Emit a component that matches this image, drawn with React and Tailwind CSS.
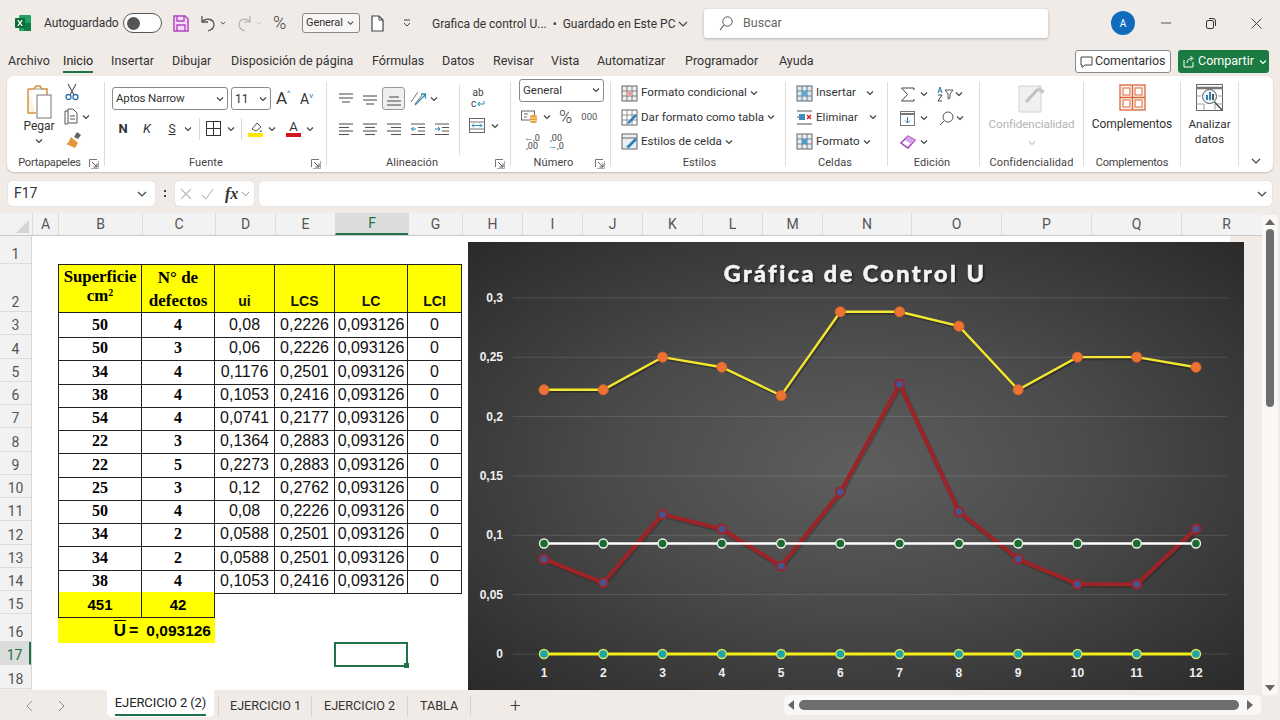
import React from "react";

const S = ({ w, h, className = "", children }) => (
  <svg width={w} height={h} viewBox={`0 0 ${w} ${h}`} fill="none" className={"shrink-0 " + className}>
    {children}
  </svg>
);
const Chev = ({ className = "", c = "#444" }) => (
  <S w={8} h={6} className={className}><path d="M1 1.5 4 4.5 7 1.5" stroke={c} strokeWidth="1.2" /></S>
);
const Launcher = () => (
  <S w={10} h={10} className="mr-[5px]">
    <path d="M.5 8V.5H8" stroke="#777" /><path d="M3 3l5 5M8 4.5V8H4.5" stroke="#555" />
    <path d="M9.5 2v7.5H2" stroke="#aaa" />
  </S>
);
const Lines = ({ rows, c = "#555" }) => (
  <S w={16} h={14}>
    {rows.map((r, i) => <path key={i} d={`M${r[0]} ${r[2]}H${r[1]}`} stroke={c} strokeWidth="1.1" />)}
  </S>
);
const Sep = () => <div className="w-px my-[6px] bg-[#dedcda] shrink-0" />;

const Group = ({ className, label, launcher, children, labelClass = "tracking-[0.1px]" }) => (
  <div className={"flex flex-col shrink-0 h-full " + className}>
    <div className="h-[78px] flex">{children}</div>
    <div className="h-[18px] flex items-center pt-[1px]">
      <span className={"flex-1 text-center text-[11px] text-[#444] " + labelClass}>{label}</span>
      {launcher && <Launcher />}
    </div>
  </div>
);

const Cellgrid = ({ accent = "#b44", fill = "#eee" }) => (
  <S w={17} h={17}>
    <rect x="1" y="1" width="15" height="15" fill={fill} stroke="#666" />
    <path d="M1 6h15M1 11h15M6 1v15M11 1v15" stroke="#666" strokeWidth=".8" />
    <rect x="6" y="6" width="5" height="5" fill={accent} />
  </S>
);

const TabsList = [
  ["Archivo", "w-[55px]", ""], ["Inicio", "w-[48px]", "on"], ["Insertar", "w-[61px]", ""], ["Dibujar", "w-[59px]", ""],
  ["Disposición de página", "w-[141px]", ""], ["Fórmulas", "w-[70px]", ""], ["Datos", "w-[51px]", ""], ["Revisar", "w-[58px]", ""],
  ["Vista", "w-[46px]", ""], ["Automatizar", "w-[88px]", ""], ["Programador", "w-[94px]", ""], ["Ayuda", "w-[60px]", ""],
];

const TitleBar = () => (
  <div className="h-[46px] flex items-center text-[#333] shrink-0">
    <S w={16} h={16} className="ml-[15px]">
      <rect x="4" y="0" width="12" height="16" rx="1" fill="#21a366" />
      <rect x="9" y="8" width="7" height="8" fill="#107c41" />
      <rect x="0" y="3" width="10" height="10" rx="1" fill="#0e6b38" />
      <path d="M2.8 5.2 7.2 10.8M7.2 5.2 2.8 10.8" stroke="#fff" strokeWidth="1.3" />
    </S>
    <span className="ml-[13px] w-[74px] text-[12px] tracking-[-0.1px]">Autoguardado</span>
    <div className="ml-[5px] w-[39px] h-[20px] rounded-full border border-[#555] bg-white flex items-center pl-[3px]">
      <div className="w-[13px] h-[13px] rounded-full bg-[#555]" />
    </div>
    <S w={16} h={17} className="ml-[11px]">
      <path d="M1 1h11l3 3v12H1z" stroke="#b146c2" strokeWidth="1.5" fill="#f4dcf7" />
      <path d="M4 1v5h7V1M4 16v-6h8v6" stroke="#b146c2" strokeWidth="1.4" />
    </S>
    <S w={17} h={17} className="ml-[10px]">
      <path d="M3 1v6h6M3 7c3-4 11-4 12 2 .5 4-3 6-6 7" stroke="#555" strokeWidth="1.3" />
    </S>
    <Chev className="ml-[4px] w-[6px]" />
    <S w={15} h={17} className="ml-[11px]">
      <path d="M13 1v6H7M13 7c-3-4-10-4-11 2-.5 4 3 6 6 7" stroke="#b5b0ad" strokeWidth="1.2" />
    </S>
    <Chev className="ml-[4px] w-[6px]" c="#bbb" />
    <span className="ml-[11px] w-[17px] text-[18px] leading-none text-[#444] font-light">%</span>
    <div className="ml-[12px] w-[58px] h-[20px] rounded-[3px] border border-[#888] bg-[#f8f6f4] flex items-center pl-[3px] text-[11px] tracking-[-0.1px]">
      General<Chev className="ml-[4px] w-[7px]" />
    </div>
    <S w={13} h={17} className="ml-[11px]">
      <path d="M1 1h7l4 4v11H1z" stroke="#444" strokeWidth="1.2" fill="#fff" /><path d="M8 1v4h4" stroke="#444" />
    </S>
    <S w={8} h={8} className="ml-[19px]"><path d="M1 1h6M1 4 4 7l3-3" stroke="#444" /></S>
    <div className="ml-[21px] w-[240px] pt-[2px] flex items-center text-[12px] text-[#333] whitespace-nowrap">
      Grafica de control U...&nbsp;&nbsp;•&nbsp;&nbsp;Guardado en Este PC
      <S w={10} h={6} className="ml-[3px]"><path d="M1 1l4 4 4-4" stroke="#444" strokeWidth="1.2" /></S>
    </div>
    <div className="ml-[32px] w-[344px] h-[29px] rounded-[3px] bg-white shadow-[0_1px_3px_rgba(0,0,0,0.25)] flex items-center pl-[15px] text-[12.5px] text-[#666]">
      <S w={14} h={15}><circle cx="8.5" cy="5.5" r="4.7" stroke="#555" /><path d="M5 9 1 14" stroke="#555" strokeWidth="1.2" /></S>
      <span className="ml-[10px]">Buscar</span>
    </div>
    <div className="ml-[63px] w-[24px] h-[24px] rounded-full bg-[#0f6cbd] text-white text-[10px] flex items-center justify-center">A</div>
    <S w={10} h={2} className="ml-[26px]"><path d="M0 1h10" stroke="#555" /></S>
    <S w={10} h={11} className="ml-[35px]"><rect x=".5" y="2.5" width="7" height="8" rx="1.5" stroke="#333" /><path d="M3 .5h4a2.5 2.5 0 0 1 2.5 2.5v5" stroke="#333" /></S>
    <S w={11} h={11} className="ml-[35px]"><path d="M.5.5l10 10M10.5.5l-10 10" stroke="#444" /></S>
  </div>
);

const TabBar = () => (
  <div className="h-[30px] flex items-center text-[12.5px] text-[#333] shrink-0 pl-[8px] pt-[1px]">
    {TabsList.map(([t, w, on]) => (
      <div key={t} className={w + " relative h-full flex items-center"}>
        <span className={on ? "border-b-2 border-[#1f7346] pb-[1px] mt-[2px] text-[#222]" : ""}>{t}</span>
      </div>
    ))}
    <div className="ml-[236px] w-[96px] h-[23px] rounded-[3px] border border-[#8a8a8a] bg-white flex items-center pl-[4px] text-[12.5px] tracking-[-0.1px]">
      <S w={13} h={12}><path d="M1 1h11v8H5l-3 2.5V9H1z" stroke="#444" /></S>
      <span className="ml-[2px]">Comentarios</span>
    </div>
    <div className="ml-[7px] w-[91px] h-[23px] rounded-[3px] bg-[#1b7b43] text-white flex items-center pl-[4px] text-[12.5px]">
      <S w={13} h={13}><path d="M2 5v7h9V7M5 8c0-3 2-4.5 5-4.5M8.5 1 11 3.5 8.5 6" stroke="#fff" /></S>
      <span className="ml-[3px]">Compartir</span>
      <Chev className="ml-[5px]" c="#fff" />
    </div>
  </div>
);

const Clipboard = () => (
  <Group className="w-[97px]" label="Portapapeles" launcher labelClass="tracking-[-0.2px] pl-[3px]">
    <div className="w-[34px] ml-[15px] flex flex-col items-center pt-[8px]">
      <S w={28} h={35}>
        <path d="M3 5h6l2-3h4l2 3h5v6" stroke="#d8933f" strokeWidth="1.5" fill="none" />
        <path d="M3 5v24h8" stroke="#d8933f" strokeWidth="1.5" fill="#fdf3e4" />
        <rect x="12" y="11" width="14" height="23" fill="#fff" stroke="#777" />
        <path d="M10 5h8" stroke="#999" />
      </S>
      <span className="text-[12px] leading-[14px] text-[#333]">Pegar</span>
      <Chev className="mt-[5px]" />
    </div>
    <div className="ml-[8px] flex flex-col pt-[7px]">
      <S w={16} h={18}><path d="M4 1l6 11M12 1 6 12" stroke="#555" strokeWidth="1.1" /><circle cx="4.5" cy="14" r="2.5" stroke="#2f6fa8" strokeWidth="1.3" /><circle cx="11.5" cy="14" r="2.5" stroke="#2f6fa8" strokeWidth="1.3" /></S>
      <div className="flex items-center mt-[7px]">
        <S w={14} h={17}><path d="M4 3H1v13h3" stroke="#555" /><path d="M4 1h5l4 4v10H4z" stroke="#555" /><path d="M6 8h5M6 11h5" stroke="#555" /></S>
        <Chev className="ml-[4px]" />
      </div>
      <S w={18} h={18} className="mt-[6px]"><path d="M10 6l3-5 4 3-3 4z" fill="#666" /><path d="M7 6l7 6-3 5-9-4 2-1z" fill="#e3963e" /></S>
    </div>
  </Group>
);

const Select = ({ className, label, textClass = "text-[12px]" }) => (
  <div className={"h-[23px] rounded-[3px] border border-[#8a8a8a] bg-white flex items-center justify-between px-[3px] " + className}>
    <span className={"text-[#333] " + textClass}>{label}</span>
    <Chev />
  </div>
);

const Font = () => (
  <Group className="w-[221px]" label="Fuente" launcher labelClass="tracking-[0.1px] pr-[4px]">
    <div className="flex flex-col pt-[11px] pl-[7px] w-full">
      <div className="flex items-center h-[23px]">
        <Select className="w-[116px]" label="Aptos Narrow" textClass="text-[11.5px] tracking-[-0.15px]" />
        <Select className="w-[40px] ml-[3px]" label="11" />
        <span className="ml-[5px] w-[22px] text-[17px] leading-none text-[#333] relative">A<span className="text-[8px] align-top text-[#2f6fa8]">^</span></span>
        <span className="ml-[2px] w-[20px] text-[14px] leading-none text-[#333]">A<span className="text-[8px] align-top text-[#2f6fa8]">v</span></span>
      </div>
      <div className="flex items-center h-[23px] mt-[7px] text-[#333]">
        <span className="w-[22px] text-[13px] font-bold text-center">N</span>
        <span className="ml-[2px] w-[22px] text-[13px] italic text-center">K</span>
        <span className="ml-[6px] w-[16px] text-[12px] underline text-center">S</span>
        <Chev className="ml-[4px]" />
        <div className="w-px h-[22px] bg-[#d8d8d8] ml-[7px]" />
        <S w={15} h={15} className="ml-[6px]"><rect x=".5" y=".5" width="14" height="14" stroke="#333" /><path d="M7.5 0v15M0 7.5h15" stroke="#333" /></S>
        <Chev className="ml-[6px]" />
        <div className="w-px h-[22px] bg-[#d8d8d8] ml-[6px]" />
        <div className="ml-[6px] w-[15px] flex flex-col items-center">
          <S w={14} h={12}><path d="M3 8l5-6 4 4-5 4z" stroke="#555" /><path d="M12 8l1 3h-2z" fill="#3c7fb5" /></S>
          <div className="w-[15px] h-[4px] bg-[#ffe600]" />
        </div>
        <Chev className="ml-[5px]" />
        <div className="ml-[10px] w-[15px] flex flex-col items-center">
          <span className="text-[13px] leading-[12px] text-[#333]">A</span>
          <div className="w-[15px] h-[4px] bg-[#d4161c]" />
        </div>
        <Chev className="ml-[5px]" />
      </div>
    </div>
  </Group>
);

const Align = () => (
  <Group className="w-[183px]" label="Alineación" launcher labelClass="tracking-[0.1px] pl-[2px]">
    <div className="flex flex-col pt-[11px] pl-[11px] w-[132px]">
      <div className="flex items-center h-[23px]">
        <Lines rows={[[1, 15, 2], [1, 15, 6], [4, 12, 10]]} />
        <div className="ml-[8px]"><Lines rows={[[1, 15, 4], [1, 15, 8], [4, 12, 12]]} /></div>
        <div className="ml-[4px] w-[23px] h-[23px] rounded-[3px] border border-[#999] bg-[#efefef] flex items-center justify-center"><Lines rows={[[3, 13, 5], [1, 15, 9], [1, 15, 13]]} /></div>
        <S w={17} h={15} className="ml-[5px]"><path d="M1 11 8 1M5 13 12 4" stroke="#777" /><path d="M5 14 15 4M11 3h4.5v4.5" stroke="#2f8fb5" strokeWidth="1.3" /></S>
        <Chev className="ml-[3px]" />
      </div>
      <div className="flex items-center h-[23px] mt-[7px]">
        <Lines rows={[[1, 15, 2], [1, 11, 5.5], [1, 15, 9], [1, 11, 12.5]]} />
        <div className="ml-[8px]"><Lines rows={[[1, 15, 2], [3, 13, 5.5], [1, 15, 9], [3, 13, 12.5]]} /></div>
        <div className="ml-[8px]"><Lines rows={[[1, 15, 2], [5, 15, 5.5], [1, 15, 9], [5, 15, 12.5]]} /></div>
        <S w={16} h={14} className="ml-[8px]"><path d="M1 2h14M8 5.5h7M8 9h7M1 12.5h14" stroke="#555" /><path d="M6 7H1.5M3.5 5 1.5 7l2 2" stroke="#1f7fc0" /></S>
        <S w={16} h={14} className="ml-[8px]"><path d="M1 2h14M8 5.5h7M8 9h7M1 12.5h14" stroke="#555" /><path d="M1 7h5M4 5l2 2-2 2" stroke="#1f7fc0" /></S>
      </div>
    </div>
    <div className="w-px h-[70px] bg-[#dedcda] mt-[9px]" />
    <div className="flex flex-col pt-[11px] pl-[9px]">
      <div className="w-[18px] h-[23px] flex flex-col items-center text-[10px] leading-[11px] text-[#444]">
        <span>ab</span>
        <div className="flex items-center">
          <span>c</span>
          <S w={9} h={8}><path d="M8 1v3H2M4 2 1.500 4 4 6" stroke="#2f8fb5" /></S>
        </div>
      </div>
      <div className="flex items-center mt-[8px]">
        <S w={16} h={15}><rect x=".5" y=".5" width="15" height="14" stroke="#666" /><path d="M0 4h16M0 11h16" stroke="#777" /><path d="M3 7.5h10M5 5.5l-2 2 2 2M11 5.5l2 2-2 2" stroke="#2f8fb5" /></S>
        <Chev className="ml-[6px]" />
      </div>
    </div>
  </Group>
);

const Number = () => (
  <Group className="w-[99px]" label="Número" launcher labelClass="tracking-[0.1px] pl-[1px]">
    <div className="flex flex-col pl-[8px] pt-[3px]">
      <Select className="w-[85px]" label="General" textClass="text-[11.5px]" />
      <div className="flex items-center h-[25px] mt-[3px]">
        <S w={18} h={14} className="ml-[2px]"><rect x=".5" y="1" width="13" height="9" fill="#fff" stroke="#666" /><path d="M3 4h4M3 7h3" stroke="#666" /><rect x="9" y="5" width="7" height="8" rx="2" fill="#e9a23b" /><path d="M9 8h7M9 10.5h7" stroke="#fff" strokeWidth=".6" /></S>
        <Chev className="ml-[4px]" />
        <span className="ml-[8px] text-[18px] leading-none font-light text-[#444]">%</span>
        <span className="ml-[9px] text-[9.5px] text-[#555]">000</span>
      </div>
      <div className="flex items-center h-[25px] text-[9px] leading-[8px] text-[#444]">
        <div className="ml-[3px] w-[20px] flex flex-col items-center"><span><span className="text-[#1f7fc0]">←</span>,0</span><span>,00</span></div>
        <div className="ml-[4px] w-[20px] flex flex-col items-center"><span>,00</span><span><span className="text-[#1f7fc0]">→</span>,0</span></div>
      </div>
    </div>
  </Group>
);

const ListRow = ({ icon, text, cls = "", chevCls = "ml-[3px]" }) => (
  <div className={"flex items-center h-[25px] " + cls}>
    {icon}
    <span className="ml-[3px] text-[11.6px] text-[#333] whitespace-nowrap">{text}</span>
    <Chev className={chevCls} />
  </div>
);

const Styles = () => (
  <Group className="w-[174px]" label="Estilos" labelClass="tracking-[0.1px] pl-[3px]">
    <div className="flex flex-col pt-[5px] pl-[10px]">
      <ListRow text="Formato condicional" icon={<Cellgrid accent="#e9a0a0" />} />
      <ListRow text="Dar formato como tabla" icon={<S w={17} h={17}><rect x="1" y="1" width="15" height="15" fill="#fff" stroke="#666" /><path d="M1 6h15M6 1v15M11 1v15M1 11h15" stroke="#666" strokeWidth=".7" /><path d="M6 14 14 5l2 2-8 8z" fill="#2f7fb5" /></S>} />
      <ListRow text="Estilos de celda" icon={<S w={17} h={17}><rect x="1" y="1" width="15" height="15" fill="#e8f0f4" stroke="#666" /><path d="M1 5h15" stroke="#666" /><path d="M5 14 14 5l2 2-8 8z" fill="#2f7fb5" /></S>} />
    </div>
  </Group>
);

const Cells = () => (
  <Group className="w-[101px]" label="Celdas" labelClass="tracking-[0.1px] pr-[3px]">
    <div className="flex flex-col pt-[5px] pl-[10px]">
      <ListRow text="Insertar" chevCls="ml-[10px]" icon={<Cellgrid accent="#5aa8d8" fill="#d6eaf7" />} />
      <ListRow text="Eliminar" chevCls="ml-[11px]" icon={<S w={17} h={17}><path d="M1 2h15M1 15h15M1 8h8" stroke="#555" /><rect x="3" y="5" width="6" height="6" fill="#3c8cc0" /><path d="M11 6l4 4M15 6l-4 4" stroke="#d4161c" strokeWidth="1.3" /></S>} />
      <ListRow text="Formato" icon={<Cellgrid accent="#4a9ad0" fill="#e3eff7" />} />
    </div>
  </Group>
);

const Edit = () => (
  <Group className="w-[91px]" label="Edición" labelClass="tracking-[0.1px] pr-[3px]">
    <div className="flex flex-col pt-[6px] pl-[12px]">
      <div className="flex items-center h-[25px]">
        <S w={15} h={15}><path d="M14 3V1H1.500l6 6.500-6 6.500H14v-2" stroke="#444" /></S>
        <Chev className="ml-[5px]" />
        <S w={17} h={16} className="ml-[9px]"><path d="M1 7l2-6 2 6M2 5h2" stroke="#2f7fb5" /><path d="M1 9h4L1 15h4" stroke="#444" /><path d="M8 4h8l-3 4v4l-2 1V8z" stroke="#555" /></S>
        <Chev className="ml-[1px]" />
      </div>
      <div className="flex items-center h-[25px]">
        <S w={15} h={15}><rect x=".5" y=".5" width="14" height="14" stroke="#777" /><path d="M0 3h15" stroke="#777" strokeWidth="2" /><path d="M7.5 6v6M5 9.500l2.500 2.500 2.500-2.500" stroke="#1f7fc0" /></S>
        <Chev className="ml-[5px]" />
        <S w={15} h={15} className="ml-[11px]"><circle cx="9" cy="6" r="5" stroke="#555" /><path d="M5 10 1 14" stroke="#555" /></S>
        <Chev className="ml-[2px]" />
      </div>
      <div className="flex items-center h-[25px]">
        <S w={16} h={14}><path d="M1 8 8 1l7 4-7 8z" stroke="#a53bc0" strokeWidth="1.4" /><path d="M8 1l7 4-4 4-6-4z" fill="#d7a6e6" /></S>
        <Chev className="ml-[4px]" />
      </div>
    </div>
  </Group>
);

const Conf = () => (
  <Group className="w-[103px]" label="Confidencialidad">
    <div className="flex flex-col items-center w-full pt-[8px]">
      <S w={28} h={29}><rect x="1" y="2" width="22" height="26" fill="#f0f0f0" stroke="#d4d4d4" /><path d="M8 18 20 5" stroke="#c0c0c0" strokeWidth="3" /><path d="M21 3l6 4-3 3-5-4z" fill="#c8c8c8" /></S>
      <span className="mt-[3px] text-[11.7px] text-[#b4b4b4] tracking-[-0.1px] whitespace-nowrap">Confidencialidad</span>
      <Chev className="mt-[6px]" c="#c8c8c8" />
    </div>
  </Group>
);

const Compl = () => (
  <Group className="w-[96px]" label="Complementos" labelClass="tracking-[-0.2px]">
    <div className="flex flex-col items-center w-full pt-[8px]">
      <S w={27} h={27}><rect x="1" y="1" width="25" height="25" fill="#fbf0ea" stroke="#d9683a" strokeWidth="1.3" /><path d="M13.5 1v25M1 13.500h25" stroke="#d9683a" strokeWidth="1.3" /><rect x="4" y="4" width="7" height="7" fill="#fff" stroke="#d9683a" /><rect x="16" y="4" width="7" height="7" fill="#fff" stroke="#d9683a" /><rect x="4" y="16" width="7" height="7" fill="#fff" stroke="#d9683a" /><rect x="16" y="16" width="7" height="7" fill="#fff" stroke="#d9683a" /></S>
      <span className="mt-[4px] text-[12px] text-[#333] tracking-[-0.1px]">Complementos</span>
    </div>
  </Group>
);

const Analyze = () => (
  <Group className="w-[57px]" label="">
    <div className="flex flex-col items-center w-full pt-[8px]">
      <S w={28} h={28}>
        <rect x=".5" y=".5" width="26" height="26" fill="#fff" stroke="#666" />
        <path d="M0 4h27" stroke="#777" strokeWidth="2.5" />
        <path d="M0 12h5M22 12h5M0 20h8M19 20h8M8 20v7M19 20v7" stroke="#888" strokeWidth=".8" />
        <circle cx="13.5" cy="12.5" r="7" fill="#eaf4fa" stroke="#555" />
        <rect x="10" y="11" width="2" height="5" fill="#2f7fb5" /><rect x="13" y="8" width="2" height="8" fill="#2f7fb5" /><rect x="16" y="10" width="2" height="6" fill="#555" />
        <path d="M18.5 18 26 26" stroke="#444" strokeWidth="1.3" />
      </S>
      <span className="mt-[5px] text-[11.7px] leading-[15px] text-center text-[#333]">Analizar<br />datos</span>
    </div>
  </Group>
);

const Ribbon = () => (
  <div className="h-[96px] mx-[7px] rounded-[7px] bg-white shadow-[0_1px_2px_rgba(0,0,0,0.2)] flex shrink-0">
    <Clipboard /><Sep /><Font /><Sep /><Align /><Sep /><Number /><Sep /><Styles /><Sep /><Cells /><Sep /><Edit /><Sep /><Conf /><Sep /><Compl /><Sep /><Analyze /><Sep />
    <div className="flex-1 flex items-end justify-center pb-[8px]">
      <S w={10} h={6}><path d="M1 1l4 4 4-4" stroke="#444" strokeWidth="1.1" /></S>
    </div>
  </div>
);

const FormulaBar = () => (
  <div className="h-[41px] flex items-start pt-[9px] pl-[8px] shrink-0">
    <div className="w-[147px] h-[25px] rounded-[4px] bg-white shadow-[0_0_1px_rgba(0,0,0,0.3)] flex items-center justify-between pl-[6px] pr-[8px] text-[14px] text-[#333]">
      F17
      <S w={10} h={6}><path d="M1 1l4 4 4-4" stroke="#444" strokeWidth="1.2" /></S>
    </div>
    <div className="w-[20px] h-[25px] flex flex-col items-center justify-center gap-[3px]">
      <div className="w-[2px] h-[2px] bg-[#444]" /><div className="w-[2px] h-[2px] bg-[#444]" />
    </div>
    <div className="w-[79px] h-[25px] rounded-[4px] bg-white shadow-[0_0_1px_rgba(0,0,0,0.3)] flex items-center pl-[5px]">
      <S w={12} h={12}><path d="M1 1l10 10M11 1 1 11" stroke="#bbb" strokeWidth="1.1" /></S>
      <S w={13} h={12} className="ml-[9px]"><path d="M1 7l4 4 7-10" stroke="#bbb" strokeWidth="1.1" /></S>
      <span className="ml-[11px] text-[16px] italic font-['Liberation_Serif',serif] text-[#333] font-bold">fx</span>
      <S w={9} h={6} className="ml-[3px]"><path d="M1 1l3.5 4L8 1" stroke="#999" /></S>
    </div>
    <div className="ml-[5px] w-[1013px] h-[25px] rounded-[4px] bg-white shadow-[0_0_1px_rgba(0,0,0,0.3)] flex items-center justify-end pr-[5px]">
      <S w={10} h={6}><path d="M1 1l4 4 4-4" stroke="#444" strokeWidth="1.2" /></S>
    </div>
  </div>
);

const Cols = [
  ["A", "w-[26px]"], ["B", "w-[84px]"], ["C", "w-[73px]"], ["D", "w-[60px]"], ["E", "w-[60px]"], ["F", "w-[73px]"], ["G", "w-[54px]"],
  ["H", "w-[60px]"], ["I", "w-[60px]"], ["J", "w-[60px]"], ["K", "w-[60px]"], ["L", "w-[60px]"], ["M", "w-[60px]"],
  ["N", "w-[89px]"], ["O", "w-[90px]"], ["P", "w-[90px]"], ["Q", "w-[90px]"], ["R", "w-[90px]"],
];

const Rows = [
  ["1", "h-[28px]"], ["2", "h-[48px]"],
  ...["3", "4", "5", "6", "7", "8", "9", "10", "11", "12", "13", "14"].map((n) => [n, "h-[23.27px]"]),
  ["15", "h-[23px]"], ["16", "h-[28px]"], ["17", "h-[23px]"], ["18", "h-[24px]"],
];

const Data = [
  ["50", "4", "0,08", "0,2226"], ["50", "3", "0,06", "0,2226"], ["34", "4", "0,1176", "0,2501"], ["38", "4", "0,1053", "0,2416"],
  ["54", "4", "0,0741", "0,2177"], ["22", "3", "0,1364", "0,2883"], ["22", "5", "0,2273", "0,2883"], ["25", "3", "0,12", "0,2762"],
  ["50", "4", "0,08", "0,2226"], ["34", "2", "0,0588", "0,2501"], ["34", "2", "0,0588", "0,2501"], ["38", "4", "0,1053", "0,2416"],
];

const Gridcols = "grid grid-cols-[83px_73px_60px_60px_73px_54px]";
const serifCell = "border-r border-b border-[#222] flex items-center justify-center font-['Liberation_Serif',serif] font-bold text-[16px] text-black";
const sansCell = "border-r border-b border-[#222] flex items-center justify-center font-['Liberation_Sans',sans-serif] text-[16px] text-[#111]";
const headSans = "border-r border-b border-[#222] bg-[#ffff00] flex items-end justify-center font-['Liberation_Sans',sans-serif] font-bold text-[14px] text-[#111]";

const SheetTable = () => (
  <div className="ml-[26px] mt-[28px] w-[404px] border-l border-t border-[#222]">
    <div className={Gridcols + " h-[48px]"}>
      <div className="border-r border-b border-[#222] bg-[#ffff00] text-center font-['Liberation_Serif',serif] font-bold text-[16.8px] leading-[19px] pt-[2px] text-black whitespace-nowrap">
        Superficie<br />cm<sup className="text-[10px] leading-none">2</sup>
      </div>
      <div className="border-r border-b border-[#222] bg-[#ffff00] text-center font-['Liberation_Serif',serif] font-bold text-[17px] leading-[23px] pt-[1px] text-black">
        N° de<br />defectos
      </div>
      <div className={headSans}>ui</div>
      <div className={headSans}>LCS</div>
      <div className={headSans}>LC</div>
      <div className={headSans}>LCI</div>
    </div>
    {Data.map((r, i) => (
      <div key={i} className={Gridcols + " h-[23.27px]"}>
        <div className={serifCell}>{r[0]}</div>
        <div className={serifCell}>{r[1]}</div>
        <div className={sansCell}>{r[2]}</div>
        <div className={sansCell}>{r[3]}</div>
        <div className={sansCell}>0,093126</div>
        <div className={sansCell}>0</div>
      </div>
    ))}
    <div className="grid grid-cols-[84px_73px] h-[23px] -ml-px">
      <div className="bg-[#ffff00] border border-t-0 border-[#222] flex items-center justify-center pt-[2px] font-['Liberation_Sans',sans-serif] font-bold text-[15px] text-black">451</div>
      <div className="bg-[#ffff00] border-r border-b border-[#222] flex items-center justify-center pt-[2px] font-['Liberation_Sans',sans-serif] font-bold text-[15px] text-black">42</div>
    </div>
    <div className="w-[157px] h-[28px] -ml-px bg-[#ffff00] flex items-center justify-end pr-[4px] pt-[3px] font-['Liberation_Sans',sans-serif] font-bold text-black">
      <span className="text-[17px] overline">U</span>
      <span className="text-[16px] ml-[3px]">=</span>
      <span className="text-[15.5px] ml-[8px]">0,093126</span>
    </div>
  </div>
);

const X = (i) => 76 + i * 59.27;
const Y = (v) => 412 - v * 1187;
const LCS = [.2226, .2226, .2501, .2416, .2177, .2883, .2883, .2762, .2226, .2501, .2501, .2416];
const UI = [.08, .06, .1176, .1053, .0741, .1364, .2273, .12, .08, .0588, .0588, .1053];
const LC = Array(12).fill(.093126);
const LCI = Array(12).fill(0);
const pts = (a) => a.map((v, i) => `${X(i)},${Y(v)}`).join(" ");
const ticks = [["0,3", .3], ["0,25", .25], ["0,2", .2], ["0,15", .15], ["0,1", .1], ["0,05", .05], ["0", 0]];

const Chart = () => (
  <div className="absolute left-[436px] top-[6px] w-[776px] h-[448px] bg-[radial-gradient(ellipse_at_center,#5e5e5e_0%,#4a4a4a_45%,#2a2a2a_100%)]">
    <svg width="776" height="448" viewBox="0 0 776 448" className="block font-['Liberation_Sans',sans-serif]">
      <text x="387" y="40" textAnchor="middle" fill="#f4f4f4" stroke="#f4f4f4" strokeWidth=".5" fontSize="23.5" fontWeight="900" letterSpacing="2.4" style={{ fontFamily: "Lato, sans-serif", filter: "drop-shadow(1px 1px 1px rgba(0,0,0,.7))" }}>Gráfica de Control U</text>
      {ticks.map(([t, v]) => (
        <g key={t}>
          <line x1="45" x2="759" y1={Y(v)} y2={Y(v)} stroke="#fff" strokeOpacity=".13" />
          <text x="35" y={Y(v) + 4} textAnchor="end" fill="#f0f0f0" fontSize="12" fontWeight="700">{t}</text>
        </g>
      ))}
      {LCS.map((_, i) => (
        <text key={i} x={X(i)} y="435" textAnchor="middle" fill="#f0f0f0" fontSize="12" fontWeight="700">{i + 1}</text>
      ))}
      <polyline points={pts(UI)} fill="none" stroke="#000" strokeOpacity=".18" strokeWidth="5" transform="translate(1 1.5)" />
      <polyline points={pts(UI)} fill="none" stroke="#9e2326" strokeWidth="4" strokeLinejoin="round" />
      <polyline points={pts(LCS)} fill="none" stroke="#000" strokeOpacity=".3" strokeWidth="3" transform="translate(1 1.5)" />
      <polyline points={pts(LCS)} fill="none" stroke="#f4e72f" strokeWidth="2.4" />
      <polyline points={pts(LC)} fill="none" stroke="#fff" strokeWidth="2.4" />
      <polyline points={pts(LCI)} fill="none" stroke="#f5ee14" strokeWidth="3" />
      {LCS.map((v, i) => <circle key={i} cx={X(i)} cy={Y(v)} r="5" fill="#ed7332" stroke="#d8662c" />)}
      {LC.map((v, i) => <circle key={i} cx={X(i)} cy={Y(v)} r="4.5" fill="#1e6b32" stroke="#e8f2e4" strokeWidth="1.4" />)}
      {UI.map((v, i) => <circle key={i} cx={X(i)} cy={Y(v)} r="4.5" fill="#46548e" stroke="#9e2326" strokeWidth="2" />)}
      {LCI.map((v, i) => <circle key={i} cx={X(i)} cy={Y(v)} r="4.5" fill="#1fa3ad" stroke="#d6e85c" strokeWidth="1.4" />)}
    </svg>
  </div>
);

const Sheet = () => (
  <div className="flex-1 flex min-h-0">
    <div className="w-[1262px] flex flex-col">
      <div className="h-[23px] flex bg-[#f2f2f2] border-b border-[#c9c9c9] shrink-0 overflow-hidden">
        <div className="w-[32px] shrink-0 flex items-end justify-end pr-[3px] pb-[2px]">
          <div className="w-0 h-0 border-l-[13px] border-l-transparent border-b-[13px] border-b-[#d4d4d4]" />
        </div>
        {Cols.map(([c, w]) => (
          <div key={c} className={w + " shrink-0 border-l border-[#dcdcdc] flex items-center justify-center text-[14px] " + (c === "F" ? "bg-[#dcdcdc] text-[#1f7346] border-b-2 border-b-[#1f7346]" : "text-[#555]")}>{c}</div>
        ))}
      </div>
      <div className="flex-1 flex min-h-0">
        <div className="w-[32px] bg-[#f2f2f2] border-r border-[#d8d8d8] shrink-0 flex flex-col">
          {Rows.map(([n, h]) => (
            <div key={n} className={h + " border-b border-[#dcdcdc] flex items-end justify-center text-[14px] leading-[18px] " + (n === "17" ? "bg-[#dcdcdc] text-[#1f7346] border-r-2 border-r-[#1f7346]" : "text-[#555]")}>{n}</div>
          ))}
        </div>
        <div className="w-[1198px] mr-[32px] bg-white relative">
          <SheetTable />
          <Chart />
          <div className="absolute left-[302px] top-[406px] w-[74px] h-[25px] border-2 border-[#1f7346]">
            <div className="absolute -right-[3px] -bottom-[3px] w-[5px] h-[5px] bg-[#1f7346]" />
          </div>
        </div>
      </div>
    </div>
    <div className="w-[16px] my-[2px] h-[480px] rounded-[4px] bg-[#faf8f7] flex flex-col items-center pt-[4px]">
      <div className="w-0 h-0 border-x-[5px] border-x-transparent border-b-[6px] border-b-[#666]" />
      <div className="w-[8px] h-[178px] mt-[4px] rounded-full bg-[#6e6e6e]" />
      <div className="flex-1" />
      <div className="w-0 h-0 border-x-[5px] border-x-transparent border-t-[6px] border-t-[#666] mb-[4px]" />
    </div>
  </div>
);

const TabSep = ({ className = "" }) => <div className={"w-px h-[20px] mt-[6px] bg-[#d8d2cd] " + className} />;

const SheetTabs = () => (
  <div className="h-[30px] flex items-start text-[12.6px] text-[#333] shrink-0">
    <S w={8} h={12} className="ml-[26px] mt-[10px]"><path d="M6 1 1 6l5 5" stroke="#999" /></S>
    <S w={8} h={12} className="ml-[23px] mt-[10px]"><path d="M2 1l5 5-5 5" stroke="#888" /></S>
    <div className="ml-[42px] w-[107px] h-[27px] bg-white rounded-b-[5px] flex flex-col items-center pt-[3px] text-[13px] text-[#222]">
      <span className="tracking-[-0.1px]">EJERCICIO 2 (2)</span>
      <div className="w-[91px] h-[2px] bg-[#1f7346] mt-[1px]" />
    </div>
    <TabSep className="ml-[4px]" />
    <span className="ml-[11px] mt-[7px] w-[81px]">EJERCICIO 1</span>
    <TabSep />
    <span className="ml-[12px] mt-[7px] w-[83px]">EJERCICIO 2</span>
    <TabSep />
    <span className="ml-[12px] mt-[7px] w-[50px]">TABLA</span>
    <TabSep />
    <span className="mt-[4px] text-[19px] font-light text-[#444] ml-[39px] leading-[24px]">+</span>
    <div className="ml-[263px] mt-[5px] w-[477px] h-[20px] rounded-[5px] bg-[#faf8f7] flex items-center px-[4px]">
      <div className="w-0 h-0 border-y-[5px] border-y-transparent border-r-[6px] border-r-[#666]" />
      <div className="ml-[5px] w-[440px] h-[10px] rounded-full bg-[#6e6e6e]" />
      <div className="flex-1" />
      <div className="w-0 h-0 border-y-[5px] border-y-transparent border-l-[6px] border-l-[#666] mr-[4px]" />
    </div>
  </div>
);

export default function App() {
  return (
    <div className="w-[1280px] h-[720px] overflow-hidden flex flex-col bg-[#f1ebe7] font-['Roboto',sans-serif]">
      <TitleBar />
      <TabBar />
      <Ribbon />
      <FormulaBar />
      <Sheet />
      <SheetTabs />
    </div>
  );
}
